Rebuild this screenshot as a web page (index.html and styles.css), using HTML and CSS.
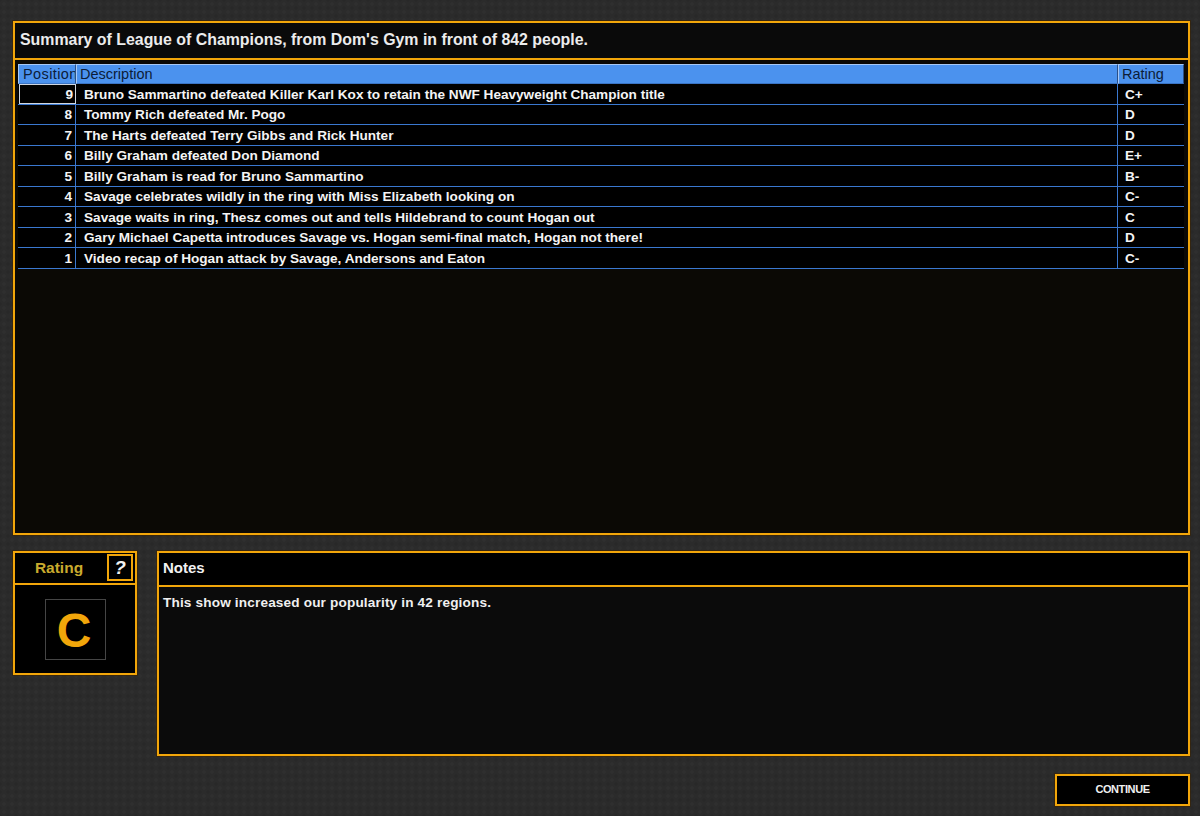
FILE: index.html
```html
<!DOCTYPE html>
<html lang="en">
<head>
<meta charset="utf-8">
<title>Show Summary</title>
<link rel="stylesheet" href="styles.css">
</head>
<body>
<div class="screen">
  <section class="panel summary">
    <header class="panel-title">Summary of League of Champions, from Dom's Gym in front of 842 people.</header>
    <div class="table-wrap">
      <div class="grid">
        <div class="row head">
          <div class="cell pos">Position</div>
          <div class="cell desc">Description</div>
          <div class="cell rate">Rating</div>
        </div>
        <div class="row">
          <div class="cell pos focus">9</div>
          <div class="cell desc">Bruno Sammartino defeated Killer Karl Kox to retain the NWF Heavyweight Champion title</div>
          <div class="cell rate">C+</div>
        </div>
        <div class="row">
          <div class="cell pos">8</div>
          <div class="cell desc">Tommy Rich defeated Mr. Pogo</div>
          <div class="cell rate">D</div>
        </div>
        <div class="row">
          <div class="cell pos">7</div>
          <div class="cell desc">The Harts defeated Terry Gibbs and Rick Hunter</div>
          <div class="cell rate">D</div>
        </div>
        <div class="row">
          <div class="cell pos">6</div>
          <div class="cell desc">Billy Graham defeated Don Diamond</div>
          <div class="cell rate">E+</div>
        </div>
        <div class="row">
          <div class="cell pos">5</div>
          <div class="cell desc">Billy Graham is read for Bruno Sammartino</div>
          <div class="cell rate">B-</div>
        </div>
        <div class="row">
          <div class="cell pos">4</div>
          <div class="cell desc">Savage celebrates wildly in the ring with Miss Elizabeth looking on</div>
          <div class="cell rate">C-</div>
        </div>
        <div class="row">
          <div class="cell pos">3</div>
          <div class="cell desc">Savage waits in ring, Thesz comes out and tells Hildebrand to count Hogan out</div>
          <div class="cell rate">C</div>
        </div>
        <div class="row">
          <div class="cell pos">2</div>
          <div class="cell desc">Gary Michael Capetta introduces Savage vs. Hogan semi-final match, Hogan not there!</div>
          <div class="cell rate">D</div>
        </div>
        <div class="row">
          <div class="cell pos">1</div>
          <div class="cell desc">Video recap of Hogan attack by Savage, Andersons and Eaton</div>
          <div class="cell rate">C-</div>
        </div>
      </div>
    </div>
  </section>

  <div class="bottom">
    <section class="panel rating-panel">
      <header class="rating-head">
        <span class="rating-label">Rating</span>
        <span class="help">?</span>
      </header>
      <div class="rating-body">
        <div class="grade">C</div>
      </div>
    </section>
    <section class="panel notes">
      <header class="notes-head">Notes</header>
      <div class="notes-body">This show increased our popularity in 42 regions.</div>
    </section>
  </div>

  <div class="actions">
    <button class="continue" type="button">CONTINUE</button>
  </div>
</div>
</body>
</html>
```

FILE: styles.css
```css
* { box-sizing: border-box; }

html, body {
  margin: 0;
  height: 100%;
}

body {
  background-color: #2b2b2b;
  background-image:
    radial-gradient(circle at 50% 50%, rgba(255,255,255,0.018) 0 1.5px, transparent 2px),
    radial-gradient(circle at 50% 50%, rgba(0,0,0,0.06) 0 1.5px, transparent 2px);
  background-size: 8px 8px, 8px 8px;
  background-position: 0 0, 4px 4px;
  font-family: "Liberation Sans", Arial, sans-serif;
  color: #f0f0f0;
  overflow: hidden;
}

.screen {
  width: 1200px;
  height: 816px;
  padding: 21px 10px 0 13px;
  display: flex;
  flex-direction: column;
}

.panel {
  border: 2px solid #f2a60a;
  box-shadow: 0 0 0 1px rgba(60, 35, 0, 0.6);
}

/* ---------- summary ---------- */
.summary {
  height: 514px;
  display: flex;
  flex-direction: column;
  background: #0b0905;
}

.panel-title {
  height: 37px;
  flex: none;
  border-bottom: 2px solid #f2a60a;
  background: #0a0a0a;
  padding: 0 0 2px 5px;
  display: flex;
  align-items: center;
  font-size: 15.9px;
  font-weight: bold;
  color: #ececec;
}

.table-wrap {
  flex: 1;
  padding: 4px 4px 0 3px;
}

.grid {
  display: flex;
  flex-direction: column;
}

.row {
  display: flex;
  height: 21px;
  border-bottom: 1px solid #3a78d0;
  background: #000;
  font-size: 13.6px;
  font-weight: bold;
  color: #f4f4f4;
}

.row:nth-child(odd) {
  height: 20px;
}

.cell {
  display: flex;
  align-items: center;
  white-space: nowrap;
  overflow: hidden;
}

.pos {
  width: 58px;
  flex: none;
  justify-content: flex-end;
  padding-right: 3px;
  border-right: 1px solid #3a78d0;
}

.desc {
  flex: 1;
  padding-left: 8px;
  border-right: 1px solid #3a78d0;
}

.rate {
  width: 66px;
  flex: none;
  padding-left: 7px;
}

.pos.focus {
  border: 1px solid #cfd6e0;
  margin-left: 1px;
  width: 57px;
  padding-right: 2px;
}

.row.head {
  height: 20px;
  background: #4b92ee;
  border-bottom: none;
  font-size: 14.5px;
  font-weight: normal;
  color: #0c1c38;
}

.head .cell {
  border-top: 1px solid #a7c9f7;
  border-left: 1px solid #a7c9f7;
  border-right: 1px solid #2a4f86;
  border-bottom: 1px solid #3a74c4;
}

.head .pos {
  justify-content: flex-start;
  padding: 0 0 0 4px;
  letter-spacing: 0.4px;
}

.head .desc {
  padding-left: 3px;
}

.head .rate {
  padding-left: 3px;
}

/* ---------- bottom ---------- */
.bottom {
  margin-top: 16px;
  display: flex;
  align-items: flex-start;
  gap: 20px;
}

.rating-panel {
  width: 124px;
  height: 124px;
  flex: none;
  background: #000;
  display: flex;
  flex-direction: column;
}

.rating-head {
  height: 32px;
  flex: none;
  border-bottom: 2px solid #f2a60a;
  display: flex;
  align-items: center;
  padding: 0 2px 1px 0;
}

.rating-label {
  flex: 1;
  text-align: center;
  padding-right: 4px;
  font-size: 15.5px;
  font-weight: bold;
  color: #c9ab2e;
}

.help {
  width: 26px;
  height: 27px;
  border: 2px solid #f2a60a;
  display: flex;
  align-items: center;
  justify-content: center;
  font-size: 19px;
  font-weight: bold;
  font-style: italic;
  color: #f2f2f2;
}

.rating-body {
  flex: 1;
  display: flex;
  align-items: flex-start;
  justify-content: center;
  padding-top: 14px;
}

.grade {
  width: 61px;
  height: 61px;
  border: 1px solid #454545;
  display: flex;
  align-items: center;
  justify-content: center;
  font-size: 48px;
  font-weight: bold;
  color: #f2a60a;
  padding: 2px 2px 0 0;
}

.notes {
  flex: 1;
  height: 205px;
  display: flex;
  flex-direction: column;
  background: #0b0b0b;
}

.notes-head {
  height: 34px;
  flex: none;
  border-bottom: 2px solid #f2a60a;
  background: #000;
  display: flex;
  align-items: center;
  padding: 0 0 3px 4px;
  font-size: 15px;
  font-weight: bold;
  color: #f2f2f2;
}

.notes-body {
  padding: 8px 4px;
  font-size: 13.6px;
  letter-spacing: 0.16px;
  font-weight: bold;
  color: #f0f0f0;
}

/* ---------- actions ---------- */
.actions {
  margin-top: 18px;
  display: flex;
  justify-content: flex-end;
}

.continue {
  width: 135px;
  height: 32px;
  background: #000;
  border: 2px solid #f2a60a;
  box-shadow: 0 0 0 1px rgba(60, 35, 0, 0.6);
  color: #f0f0f0;
  font-family: "Liberation Sans", Arial, sans-serif;
  font-size: 11px;
  font-weight: bold;
  letter-spacing: -0.4px;
  padding: 0 0 2px;
  cursor: pointer;
}
```
